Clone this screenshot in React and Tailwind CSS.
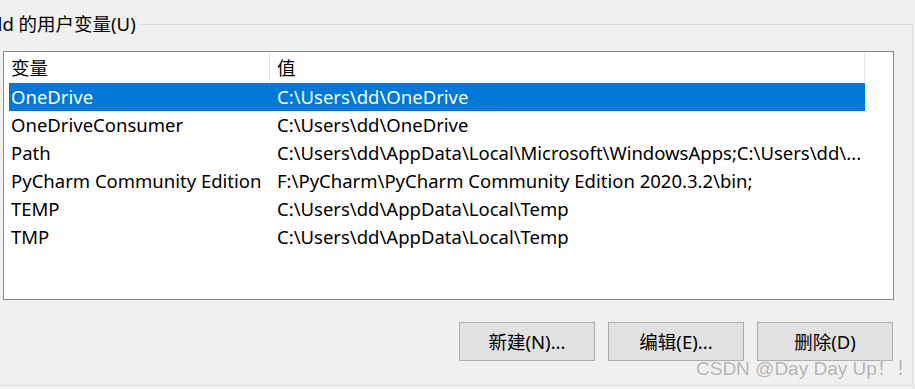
import React from "react";

const rows = [
  ["OneDrive", "C:\\Users\\dd\\OneDrive"],
  ["OneDriveConsumer", "C:\\Users\\dd\\OneDrive"],
  ["Path", "C:\\Users\\dd\\AppData\\Local\\Microsoft\\WindowsApps;C:\\Users\\dd\\..."],
  ["PyCharm Community Edition", "F:\\PyCharm\\PyCharm Community Edition 2020.3.2\\bin;"],
  ["TEMP", "C:\\Users\\dd\\AppData\\Local\\Temp"],
  ["TMP", "C:\\Users\\dd\\AppData\\Local\\Temp"],
];

const font = "font-['Noto_Sans','Noto_Sans_CJK_SC',sans-serif]";

export default function App() {
  return (
    <div className={`relative w-[915px] h-[389px] overflow-hidden bg-[#f0f0f0] text-[18.5px] text-black ${font}`}>
      <fieldset className="ml-[-14px] mt-[12px] w-[927px] h-[374px] border border-[#dcdcdc]">
        <legend className="ml-[1px] px-[3px] leading-[24px]">dd 的用户变量(U)</legend>

        {/* List view */}
        <div className="ml-[16px] mt-[15px] w-[891px] h-[249px] border border-[#828790] bg-white pl-[5px]">
          <div className="flex h-[31px] items-center">
            <div className="w-[261px] h-[29px] flex items-center pl-[2px] border-r border-[#e5e5e5]">变量</div>
            <div className="w-[595px] h-[29px] flex items-center pl-[7px] border-r border-[#e5e5e5]">值</div>
          </div>
          {rows.map(([name, value], i) => (
            <div
              key={name}
              className={`flex h-[28px] w-[856px] items-center whitespace-nowrap ${i === 0 ? "bg-[#0078d7] text-white" : ""}`}
            >
              <div className="w-[261px] pl-[2px]">{name}</div>
              <div className="w-[595px] pl-[7px]">{value}</div>
            </div>
          ))}
        </div>

        {/* Buttons */}
        <div className="flex justify-end gap-[13px] mt-[22px] mr-[19px]">
          {["新建(N)...", "编辑(E)...", "删除(D)"].map((label) => (
            <button
              key={label}
              className="w-[136px] h-[39px] border border-[#adadad] bg-[#e1e1e1] flex items-center justify-center"
            >
              {label}
            </button>
          ))}
        </div>
      </fieldset>

      {/* Watermark */}
      <div className="absolute left-[696px] top-[355px] text-[19px] text-[#b4b4b4] font-['Liberation_Sans','Noto_Sans_CJK_SC',sans-serif] whitespace-nowrap [text-shadow:0_0_1px_#fff]">
        CSDN @Day Day Up！！
      </div>
    </div>
  );
}
